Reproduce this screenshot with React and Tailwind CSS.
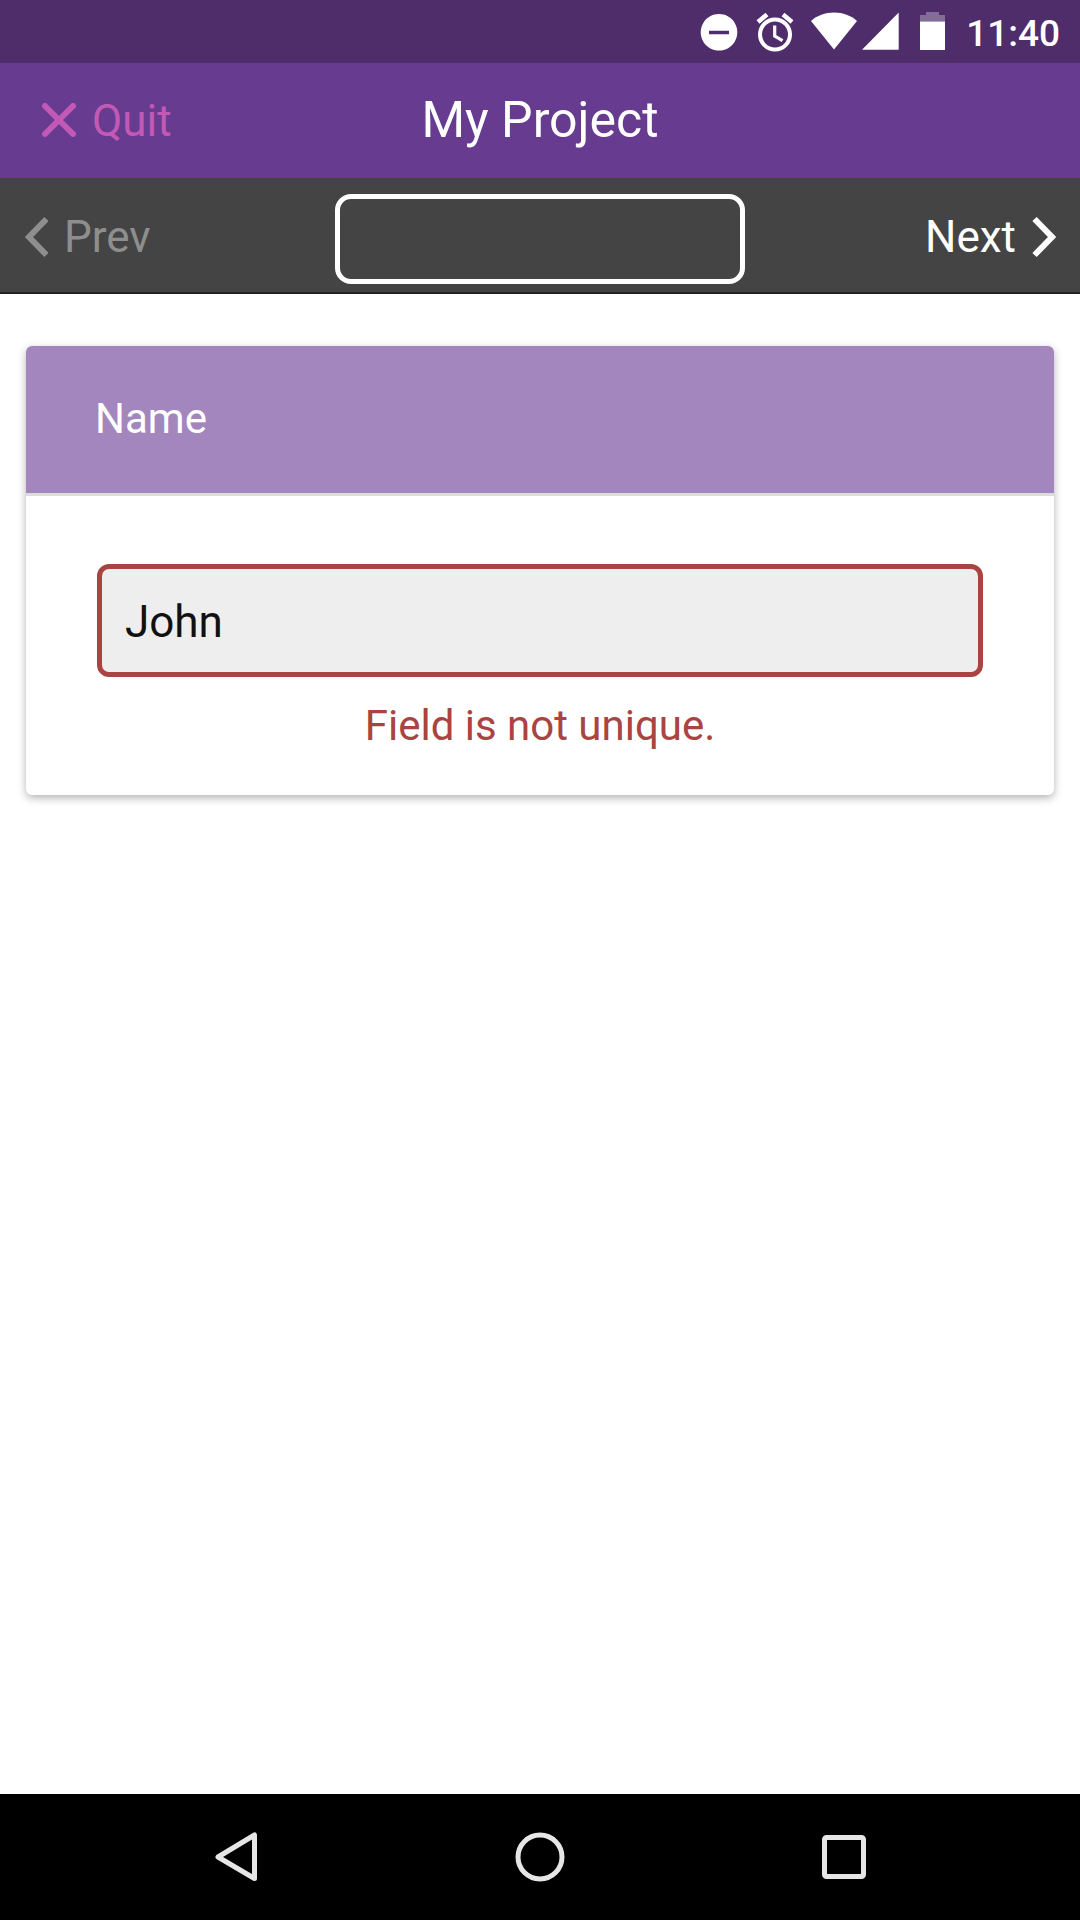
function StatusBar() {
  return (
    <div className="flex h-[63px] items-center justify-end bg-[#4e2d6a] pr-5 text-white">
      <svg className="h-16 w-[256px]" viewBox="0 0 256 64" fill="none" aria-hidden="true">
        <path fill="currentColor" fillRule="evenodd" d="M29 14a18.3 18.3 0 1 0 .01 0zM19 30.7h20v3.6H19z" />
        <g stroke="currentColor" strokeWidth="4">
          <circle cx="85" cy="34.500" r="15" />
          <path d="M68 22l9-7.500M102 22l-9-7.500" strokeWidth="4.500" />
          <path d="M84.700 25.500v10.500l7.800 4.700" strokeWidth="3.200" />
        </g>
        <path fill="currentColor" d="M144 49.500L121 21c6-5.500 14-8.500 23-8.500s17 3 23 8.500z" />
        <path fill="currentColor" d="M208.700 12.500v37.200H172z" />
        <path fill="currentColor" fillOpacity=".3" d="M230 21.500V15h6v-3h13v3h6v6.500z" />
        <path fill="currentColor" d="M230 21.500h25V50h-25z" />
      </svg>
      <span className="ml-5 pt-1 text-[37px] leading-[60px] font-medium">11:40</span>
    </div>
  );
}

function Chevron({ flip }) {
  return (
    <svg className="h-[42px] w-6 shrink-0" viewBox="0 0 24 42" fill="none" stroke="currentColor" strokeWidth="6" aria-hidden="true">
      <path d={flip ? "M2.500 3l17.500 18L2.500 39" : "M22.500 3L5 21l17.500 18"} />
    </svg>
  );
}

export default function App() {
  return (
    <div className="flex min-h-screen flex-col bg-white font-['Roboto',sans-serif]">
      <StatusBar />
      <header className="grid h-[115px] grid-cols-3 items-center bg-[#673b8f] px-6">
        <button type="button" className="flex items-center gap-4 justify-self-start pl-4 text-[44px] leading-[54px] text-[#c259b5]">
          <svg className="size-9" viewBox="0 0 36 36" fill="none" stroke="currentColor" strokeWidth="6" strokeLinecap="round" aria-hidden="true">
            <path d="M5 3l28 28M33 3L5 31" />
          </svg>
          Quit
        </button>
        <h1 className="pb-0.5 text-center text-[50px] leading-[60px] whitespace-nowrap text-white">My Project</h1>
      </header>
      <nav className="grid h-[116px] grid-cols-[1fr_410px_1fr] items-center border-b-2 border-[#222222] bg-[#444444] px-6 pt-1 text-[44px] leading-[54px]" aria-label="Questions">
        <button type="button" disabled className="flex items-center gap-4 justify-self-start text-[#8e8e8e]">
          <Chevron />
          Prev
        </button>
        <input type="text" aria-label="Current question" className="mt-1 h-[90px] w-full rounded-2xl border-5 border-white bg-transparent px-4 text-white outline-none" />
        <button type="button" className="flex items-center gap-4 justify-self-end text-white">
          Next
          <Chevron flip />
        </button>
      </nav>
      <main className="flex-1 px-[26px] pt-[52px]">
        <section className="overflow-hidden rounded-md bg-white shadow-[0_3px_9px_rgba(0,0,0,0.3)]">
          <label htmlFor="name" className="block border-b-3 border-[#dddddd] bg-[#a386bd] px-[69px] pt-[47px] pb-[49px] text-[42px] leading-[51px] text-white">
            Name
          </label>
          <div className="px-[71px] pt-[68px] pb-11">
            <input
              id="name"
              type="text"
              defaultValue="John"
              aria-invalid="true"
              aria-describedby="name-error"
              className="block h-[113px] w-full rounded-xl border-5 border-[#a94442] bg-[#eeeeee] px-[23px] pt-0.5 text-[44px] text-[#111111] outline-none"
            />
            <p id="name-error" className="mt-6 text-center text-[42px] leading-[50px] text-[#a94442]">Field is not unique.</p>
          </div>
        </section>
      </main>
      <footer className="grid h-[126px] grid-cols-3 items-center justify-items-center bg-black px-21 text-[#e6e6e6]">
        <button type="button" aria-label="Back">
          <svg className="size-14" viewBox="0 0 56 56" fill="none" stroke="currentColor" strokeWidth="5" strokeLinejoin="round" aria-hidden="true">
            <path d="M46.500 6v43.500L10 28z" />
          </svg>
        </button>
        <button type="button" aria-label="Home">
          <svg className="size-14" viewBox="0 0 56 56" fill="none" stroke="currentColor" strokeWidth="5" aria-hidden="true">
            <circle cx="28" cy="28" r="22" />
          </svg>
        </button>
        <button type="button" aria-label="Recent apps">
          <svg className="size-14" viewBox="0 0 56 56" fill="none" stroke="currentColor" strokeWidth="5" aria-hidden="true">
            <rect x="8.500" y="8.500" width="39" height="39" rx="2" />
          </svg>
        </button>
      </footer>
    </div>
  );
}
